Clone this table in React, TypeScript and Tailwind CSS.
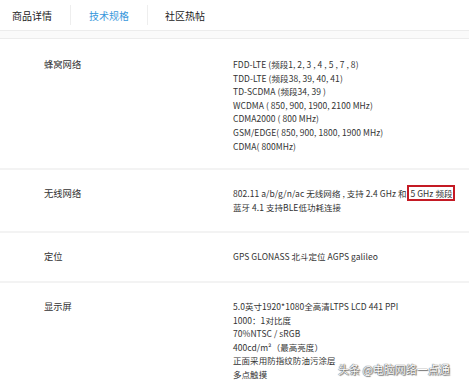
const font = { fontFamily: '"Noto Sans CJK SC", "Noto Sans", sans-serif' };

const specs: { label: string; lines: React.ReactNode[] }[] = [
  {
    label: "蜂窝网络",
    lines: [
      "FDD-LTE (频段1, 2, 3 , 4 , 5 , 7 , 8)",
      "TDD-LTE (频段38, 39, 40, 41)",
      "TD-SCDMA (频段34, 39 )",
      "WCDMA ( 850, 900, 1900, 2100 MHz)",
      "CDMA2000 ( 800 MHz)",
      "GSM/EDGE( 850, 900, 1800, 1900 MHz)",
      "CDMA( 800MHz)",
    ],
  },
  {
    label: "无线网络",
    lines: [
      <>
        802.11 a/b/g/n/ac 无线网络 , 支持 2.4 GHz 和
        <span className="border-2 border-[#c41a24] px-[1px] ml-[1px]">5 GHz 频段</span>
      </>,
      "蓝牙 4.1 支持BLE低功耗连接",
    ],
  },
  { label: "定位", lines: ["GPS GLONASS 北斗定位 AGPS galileo"] },
  {
    label: "显示屏",
    lines: [
      "5.0英寸1920*1080全高清LTPS LCD 441 PPI",
      "1000：1对比度",
      "70%NTSC / sRGB",
      "400cd/m²（最高亮度）",
      "正面采用防指纹防油污涂层",
      "多点触摸",
    ],
  },
];

export default function App() {
  return (
    <div className="relative w-[469px] h-[386px] overflow-hidden bg-white text-[#333]" style={font}>
      <div className="flex h-[31px] items-center border-b border-[#ececec] text-[10px]">
        <div className="px-[12px] text-[#222]">商品详情</div>
        <div className="h-[20px] w-px bg-[#eee] ml-[6px]" />
        <div className="px-[18px] text-[#3a98dc]">技术规格</div>
        <div className="h-[20px] w-px bg-[#eee]" />
        <div className="px-[17px] text-[#222]">社区热帖</div>
      </div>
      <div className="h-[8px] bg-[#fafafa] border-b border-[#ececec]" />
      <div className="leading-[13.6px]">
        {specs.map((s, i) => (
          <div
            key={s.label}
            className={`flex border-b-2 border-[#f3f3f3] ${i === 0 ? "pt-[19px] pb-[15px]" : "py-[17px]"}`}
          >
            <div className="w-[233px] pl-[44px] shrink-0 text-[9.3px]">{s.label}</div>
            <div className="flex flex-col text-[8.5px] tracking-[0.05px]">
              {s.lines.map((l, j) => (
                <div key={j} className="whitespace-nowrap">{l}</div>
              ))}
            </div>
          </div>
        ))}
      </div>
      <div
        className="absolute left-[338px] top-[361px] text-[11px] text-white whitespace-nowrap"
        style={{ textShadow: "0 0 1px #555, 0 0 1px #555, 1px 1px 1px #777" }}
      >
        头条 @电脑网络一点通
      </div>
    </div>
  );
}
